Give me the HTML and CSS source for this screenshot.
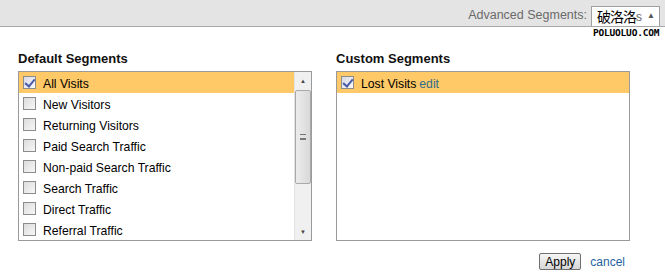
FILE: index.html
```html
<!DOCTYPE html>
<html lang="en">

<head>
    <meta charset="UTF-8">
    <title>Advanced Segments</title>
    <link rel="stylesheet" href="styles.css">
</head>

<body>
    <div class="topbar">
        <span class="topbar-label">Advanced Segments:</span>
        <div class="picker">
            <span class="picker-text">All Visits</span>
            <span class="picker-mark">破洛洛</span>
            <span class="picker-arrow">&#9650;</span>
            <span class="watermark">POLUOLUO.COM</span>
        </div>
    </div>

    <div class="panels">
        <div class="panel">
            <h3>Default Segments</h3>
            <div class="box">
                <ul class="list">
                    <li class="row selected"><span class="check on"></span>All Visits</li>
                    <li class="row"><span class="check"></span>New Visitors</li>
                    <li class="row"><span class="check"></span>Returning Visitors</li>
                    <li class="row"><span class="check"></span>Paid Search Traffic</li>
                    <li class="row"><span class="check"></span>Non-paid Search Traffic</li>
                    <li class="row"><span class="check"></span>Search Traffic</li>
                    <li class="row"><span class="check"></span>Direct Traffic</li>
                    <li class="row"><span class="check"></span>Referral Traffic</li>
                </ul>
                <div class="scrollbar">
                    <div class="sb-btn">&#9650;</div>
                    <div class="sb-track">
                        <div class="sb-thumb"><span class="grip"></span></div>
                    </div>
                    <div class="sb-btn">&#9660;</div>
                </div>
            </div>
        </div>

        <div class="panel">
            <h3>Custom Segments</h3>
            <div class="box">
                <ul class="list">
                    <li class="row selected"><span class="check on"></span>Lost Visits <a href="#" class="edit">edit</a></li>
                </ul>
            </div>
        </div>
    </div>

    <div class="actions">
        <button type="button">Apply</button>
        <a href="#" class="cancel">cancel</a>
    </div>
</body>

</html>
```

FILE: styles.css
```css
* {
    margin: 0;
    padding: 0;
    box-sizing: border-box;
}

body {
    font-family: "Liberation Sans", Arial, sans-serif;
    font-size: 12px;
    color: #000;
    background: #fff;
    width: 665px;
    height: 277px;
    overflow: hidden;
}

.topbar {
    height: 27px;
    background: #e4e4e4;
    border-bottom: 1px solid #a8a8a8;
    display: flex;
    justify-content: flex-end;
    align-items: flex-end;
    padding-right: 5px;
}

.topbar-label {
    color: #6a6a6a;
    font-size: 12.5px;
    margin-right: 4px;
    margin-bottom: 4px;
}

.picker {
    position: relative;
    width: 69px;
    height: 20px;
    background: #fff;
    border: 1px solid #a0a0a0;
    border-bottom: none;
    display: flex;
    align-items: center;
    padding-left: 5px;
}

.picker-text {
    color: #666;
    font-size: 12px;
}

.picker-mark {
    position: absolute;
    left: 5px;
    top: 1px;
    font-family: "Noto Sans CJK SC", sans-serif;
    font-size: 14px;
    line-height: 16px;
    color: #000;
    background: #fff;
    letter-spacing: -1px;
}

.picker-arrow {
    position: absolute;
    right: 4px;
    top: 4px;
    font-size: 8px;
    color: #555;
}

.watermark {
    position: absolute;
    left: 1px;
    top: 21px;
    font-family: "DejaVu Sans Mono", monospace;
    font-weight: bold;
    font-size: 9.5px;
    line-height: 10px;
    letter-spacing: -0.2px;
    color: #000;
}

.panels {
    display: flex;
    gap: 24px;
    padding: 24px 0 0 18px;
}

.panel {
    width: 294px;
}

h3 {
    font-size: 13px;
    font-weight: bold;
    line-height: 16px;
    margin-bottom: 4px;
    color: #111;
}

.box {
    height: 170px;
    border: 1px solid #9a9a9a;
    display: flex;
    overflow: hidden;
}

.list {
    list-style: none;
    flex: 1;
}

.row {
    height: 21px;
    display: flex;
    align-items: center;
    padding: 3px 0 0 4px;
    font-size: 12.2px;
}

.row.selected {
    background: #fec966;
}

.check {
    width: 13px;
    height: 13px;
    border: 1px solid #8c8c8c;
    background: linear-gradient(135deg, #dcdcdc, #f7f7f7);
    margin: -3px 7px 0 0;
    flex-shrink: 0;
    position: relative;
}

.check.on {
    background: linear-gradient(135deg, #d8d8e4, #fafafa);
}

.check.on::after {
    content: "";
    position: absolute;
    left: 3px;
    top: 0px;
    width: 4px;
    height: 8px;
    border-right: 2px solid #4a5ca8;
    border-bottom: 2px solid #4a5ca8;
    transform: rotate(40deg);
}

.edit {
    color: #2f6c8c;
    text-decoration: none;
    margin-left: 3px;
}

.scrollbar {
    width: 17px;
    display: flex;
    flex-direction: column;
    background: #f0f0f0;
    border-left: 1px solid #e2e2e2;
}

.sb-btn {
    height: 17px;
    font-size: 6px;
    color: #444;
    display: flex;
    align-items: center;
    justify-content: center;
}

.sb-track {
    flex: 1;
}

.sb-thumb {
    height: 94px;
    margin: 1px 0 0 0;
    border: 1px solid #a9a9a9;
    border-radius: 2px;
    background: linear-gradient(90deg, #ececec, #d9d9d9);
    display: flex;
    align-items: center;
    justify-content: center;
}

.grip {
    width: 6px;
    height: 6px;
    border-top: 1px solid #777;
    border-bottom: 1px solid #777;
    position: relative;
}

.grip::after {
    content: "";
    position: absolute;
    left: 0;
    right: 0;
    top: 1px;
    height: 2px;
    border-bottom: 1px solid #777;
}

.actions {
    display: flex;
    justify-content: flex-end;
    align-items: center;
    gap: 9px;
    padding: 12px 40px 0 0;
}

button {
    font-family: "Liberation Sans", Arial, sans-serif;
    font-size: 12px;
    height: 17px;
    padding: 0 5px;
    border: 1px solid #6f6f6f;
    border-radius: 2px;
    background: linear-gradient(#f6f6f6, #d6d6d6);
    color: #000;
}

.cancel {
    color: #1f5fa0;
    text-decoration: none;
    font-size: 12px;
}
```
